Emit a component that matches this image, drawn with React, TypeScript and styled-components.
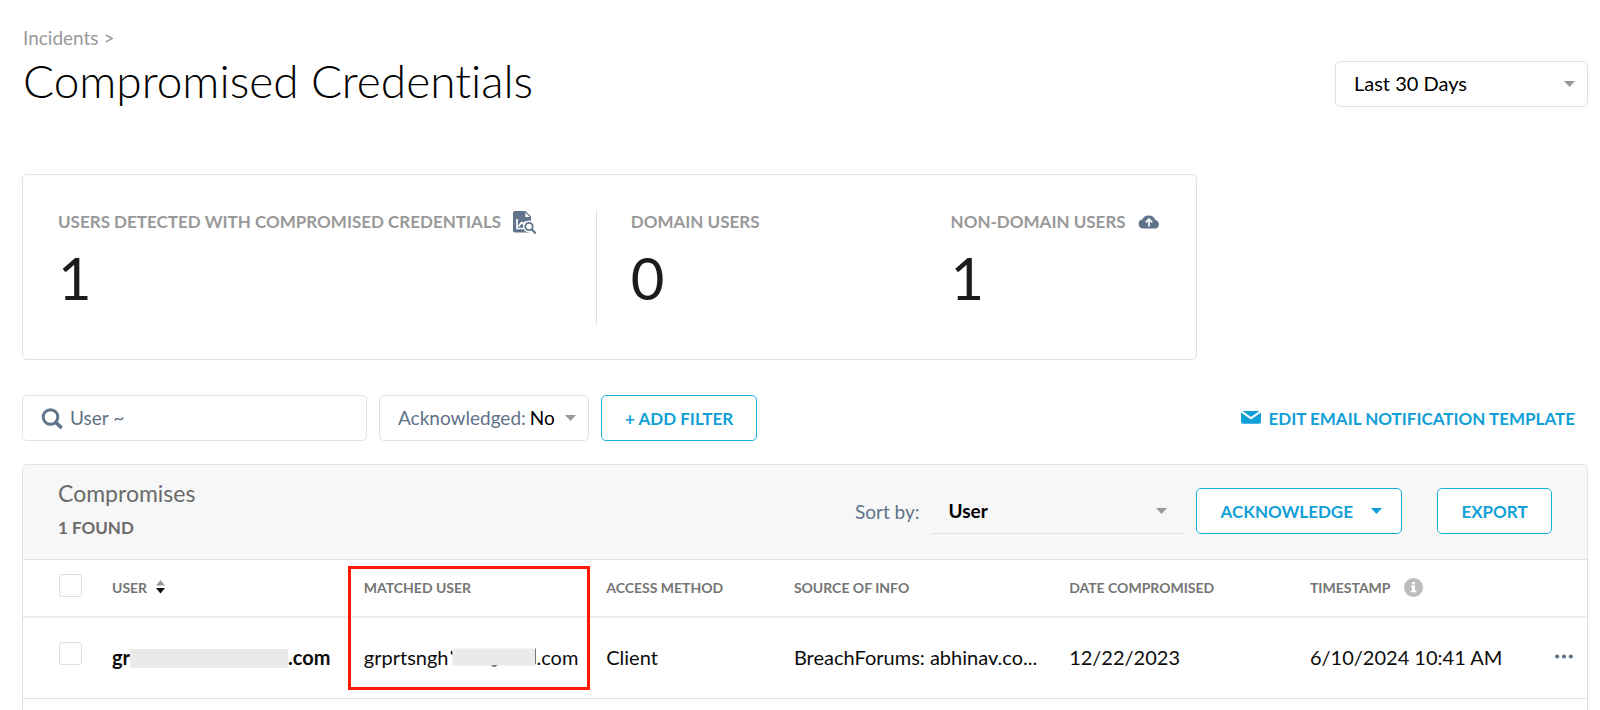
import React from "react";
import styled, { createGlobalStyle } from "styled-components";

const color = {
  ink: "#111111",
  heading: "#6b6b6b",
  muted: "#999999",
  slate: "#5f738a",
  line: "#e2e2e2",
  panel: "#f7f7f7",
  link: "#109fd6",
  outline: "#17b1dc",
  redact: "#eaeaea",
  alert: "#ff1a00",
};

const GlobalStyle = createGlobalStyle`
  *, *::before, *::after { box-sizing: border-box; }
  body {
    margin: 0;
    background: #ffffff;
    color: ${color.ink};
    font-family: Lato, "Liberation Sans", sans-serif;
    font-variant-ligatures: none;
  }
  button, input, select { font-family: inherit; }
`;

const Page = styled.main`
  display: flex;
  flex-direction: column;
  min-height: 100vh;
  padding: 26px 12px 0 22px;
`;

const PageHeader = styled.header`
  display: flex;
  align-items: flex-end;
  justify-content: space-between;
  gap: 24px;
  padding-left: 1px;
`;

const Breadcrumb = styled.nav`
  font-size: 19px;
  line-height: 24px;
  color: ${color.muted};
  a { color: inherit; text-decoration: none; }
`;

const Title = styled.h1`
  margin: 3px 0 0;
  font-size: 46px;
  line-height: 56px;
  font-weight: 300;
  color: #000000;
`;

const RangePicker = styled.div`
  padding-bottom: 2px;
`;

const SelectShell = styled.span<{ $variant: "box" | "line" | "plain" }>`
  display: grid;
  align-items: center;
  height: 46px;
  width: ${(p) => (p.$variant === "plain" ? "auto" : "253px")};
  border: ${(p) => (p.$variant === "box" ? `1px solid ${color.line}` : "0")};
  border-bottom: ${(p) => (p.$variant === "plain" ? "0" : `1px solid ${color.line}`)};
  border-radius: ${(p) => (p.$variant === "box" ? "5px" : "0")};
  > * { grid-area: 1 / 1; }
  > svg { justify-self: end; margin-right: ${(p) => (p.$variant === "line" ? "17px" : "12px")}; pointer-events: none; }
`;

const Select = styled.select<{ $strong?: boolean; $inset?: boolean; $size: number }>`
  appearance: none;
  width: 100%;
  height: 100%;
  border: 0;
  padding: 0 32px ${(p) => (p.$strong ? "0" : "2px")} ${(p) => (p.$inset ? "18px" : "0")};
  background: transparent;
  color: #000000;
  font-size: ${(p) => p.$size}px;
  font-weight: ${(p) => (p.$strong ? 700 : 400)};
`;

const SummaryCard = styled.section`
  display: grid;
  grid-template-columns: 539fr 354fr 210fr;
  width: 75%;
  margin-top: 65px;
  padding: 35px 35px 34px;
  border: 1px solid ${color.line};
  border-radius: 5px;
`;

const Stat = styled.div<{ $divided?: boolean; $indent?: boolean }>`
  min-height: 115px;
  padding-left: ${(p) => (p.$indent ? "34px" : "0")};
  border-right: ${(p) => (p.$divided ? `1px solid ${color.line}` : "0")};
`;

const StatLabel = styled.div`
  display: flex;
  align-items: center;
  gap: 12px;
  height: 24px;
  font-size: 17px;
  line-height: 24px;
  font-weight: 700;
  white-space: nowrap;
  color: ${color.muted};
  svg { flex: none; }
`;

const StatValue = styled.div`
  margin-top: 9px;
  font-size: 58px;
  line-height: 70px;
  color: #1c1c1c;
`;

const Filters = styled.div`
  display: flex;
  align-items: center;
  gap: 12px;
  margin-top: 35px;
`;

const SearchBox = styled.label`
  display: flex;
  align-items: center;
  gap: 7px;
  width: 345px;
  height: 46px;
  padding: 0 18px;
  border: 1px solid ${color.line};
  border-radius: 5px;
`;

const SearchInput = styled.input`
  flex: 1;
  min-width: 0;
  height: 40px;
  border: 0;
  padding: 0 0 2px;
  background: transparent;
  font-size: 19px;
  color: ${color.slate};
  &::placeholder { color: ${color.slate}; opacity: 1; }
`;

const FilterBox = styled.label`
  display: flex;
  align-items: center;
  gap: 4px;
  width: 210px;
  height: 46px;
  padding-left: 18px;
  border: 1px solid ${color.line};
  border-radius: 5px;
  font-size: 19px;
  color: ${color.slate};
  > span:first-child { padding-bottom: 2px; }
  > span:last-child { flex: 1; }
`;

const Button = styled.button<{ $menu?: boolean }>`
  display: flex;
  align-items: center;
  justify-content: center;
  gap: 18px;
  min-width: 115px;
  height: 46px;
  padding: ${(p) => (p.$menu ? "0 19px 0 24px" : "0 23px")};
  border: 1px solid ${color.outline};
  border-radius: 5px;
  background: #ffffff;
  color: ${color.link};
  font-size: 17px;
  font-weight: 700;
  white-space: nowrap;
`;

const TemplateLink = styled.a`
  display: flex;
  align-items: center;
  gap: 7px;
  margin-left: auto;
  padding-right: 13px;
  color: ${color.link};
  font-size: 17px;
  font-weight: 700;
  text-decoration: none;
  white-space: nowrap;
`;

const Panel = styled.section`
  flex: 1;
  margin-top: 23px;
  border: 1px solid ${color.line};
  border-bottom: 0;
  border-radius: 5px 5px 0 0;
`;

const PanelHeader = styled.div`
  display: flex;
  align-items: center;
  justify-content: space-between;
  min-height: 95px;
  padding: 0 35px 2px;
  border-bottom: 1px solid ${color.line};
  border-radius: 5px 5px 0 0;
  background: ${color.panel};
`;

const PanelTitle = styled.h2`
  margin: 0;
  font-size: 23px;
  line-height: 28px;
  font-weight: 400;
  color: ${color.heading};
`;

const FoundCount = styled.p`
  margin: 9px 0 3px;
  font-size: 17px;
  line-height: 24px;
  font-weight: 700;
  color: ${color.heading};
`;

const PanelActions = styled.div`
  display: flex;
  align-items: center;
  gap: 12px;
`;

const SortLabel = styled.label`
  display: flex;
  align-items: center;
  gap: 11px;
  font-size: 19px;
  color: ${color.slate};
`;

const ExportSlot = styled.div`
  margin-left: 23px;
`;

const Table = styled.table`
  width: 100%;
  table-layout: fixed;
  border-collapse: separate;
  border-spacing: 0;
`;

const Col = styled.col<{ $width: string }>`
  width: ${(p) => p.$width};
`;

const HeadCell = styled.th`
  position: relative;
  height: 58px;
  padding: 0 0 2px 12px;
  border-right: 1px solid #ffffff;
  border-bottom: 2px solid #eeeeee;
  font-size: 14px;
  font-weight: 700;
  text-align: left;
  white-space: nowrap;
  color: #757575;
`;

const HeadLabel = styled.span<{ $gap?: number }>`
  display: flex;
  align-items: center;
  gap: ${(p) => p.$gap ?? 0}px;
`;

const Cell = styled.td<{ $strong?: boolean }>`
  height: 81px;
  padding: 0 0 2px 12px;
  border-bottom: 1px solid ${color.line};
  font-size: 20px;
  font-weight: ${(p) => (p.$strong ? 700 : 400)};
  white-space: nowrap;
  color: #0c0c0c;
`;

const MaskedText = styled.span`
  display: flex;
  align-items: center;
`;

const Redaction = styled.span`
  width: 158px;
  height: 19px;
  margin-top: 3px;
  background: ${color.redact};
`;

const Checkbox = styled.input<{ $lift: number }>`
  appearance: none;
  display: block;
  width: 23px;
  height: 23px;
  margin: 0 0 ${(p) => p.$lift}px;
  border: 1px solid #dddddd;
  border-radius: 3px;
  background: #ffffff;
`;

const ColumnHighlight = styled.span`
  position: absolute;
  top: 6px;
  left: -4px;
  right: 3px;
  height: 124px;
  border: 3px solid ${color.alert};
  pointer-events: none;
`;

const MoreButton = styled.button`
  display: block;
  padding: 4px;
  margin: 0 0 2px -1px;
  border: 0;
  background: transparent;
  svg { display: block; }
`;

const Caret = ({ fill = "#999999" }: { fill?: string }) => (
  <svg width="11" height="6" viewBox="0 0 11 6" aria-hidden="true">
    <path d="M0 0h11L5.500 6z" fill={fill} />
  </svg>
);

const ReportIcon = () => (
  <svg width="23" height="23" viewBox="0 0 23 23" aria-hidden="true">
    <path d="M2 0h10.500L18 5.500V19a2.500 2.500 0 0 1-2.500 2.500H2A2 2 0 0 1 0 19.500V2a2 2 0 0 1 2-2z" fill={color.slate} />
    <path d="M12.300 1.500V6h4.500z" fill="#ffffff" />
    <path d="M4 8v9.500h7M5.500 15.500l3-4 2 1.500 2-2.500" fill="none" stroke="#ffffff" strokeWidth="1.700" />
    <circle cx="16" cy="15.500" r="6" fill="#ffffff" />
    <path d="M18 17l5 5-2 2-5-4z" fill="#ffffff" />
    <circle cx="16" cy="15.500" r="3.700" fill="#ffffff" stroke={color.slate} strokeWidth="1.800" />
    <path d="M18.700 18.300l3.300 3.500" stroke={color.slate} strokeWidth="2.200" strokeLinecap="round" />
  </svg>
);

const CloudIcon = () => (
  <svg width="22" height="14" viewBox="0 0 22 14" aria-hidden="true">
    <path d="M5 13.500a4.600 4.600 0 0 1-.7-9.100A7 6.500 0 0 1 17.300 5a4.300 4.300 0 0 1-.3 8.500z" fill={color.slate} />
    <path d="M11 11.500V4.500M7.800 7.300L11 4l3.200 3.300" fill="none" stroke="#ffffff" strokeWidth="1.700" />
  </svg>
);

const SearchIcon = () => (
  <svg width="22" height="22" viewBox="0 0 22 22" aria-hidden="true">
    <circle cx="9.500" cy="10" r="7.300" fill="none" stroke={color.slate} strokeWidth="2.900" />
    <path d="M15 15.500l4.600 4.600" stroke={color.slate} strokeWidth="3.600" strokeLinecap="round" />
  </svg>
);

const MailIcon = () => (
  <svg width="20" height="14" viewBox="0 0 20 14" aria-hidden="true">
    <path d="M1.500 0h17L10 6z" fill={color.link} />
    <path d="M0 1.500l10 7 10-7V11a1.800 1.800 0 0 1-1.800 1.800H1.800A1.800 1.800 0 0 1 0 11z" fill={color.link} />
  </svg>
);

const SortIcon = () => (
  <svg width="9" height="14" viewBox="0 0 9 14" aria-hidden="true">
    <path d="M0 5.500L4.500 0 9 5.500z" fill="#999999" />
    <path d="M0 8h9l-4.500 5.500z" fill="#111111" />
  </svg>
);

const InfoIcon = () => (
  <svg width="19" height="19" viewBox="0 0 19 19" aria-hidden="true">
    <circle cx="9.500" cy="9.500" r="9.500" fill="#bdbdbd" />
    <path d="M8 4h3v2.400H8zM7 7.500h4v5h1.300v1.800H6.700v-1.800H8V9.300H7z" fill="#ffffff" />
  </svg>
);

const DotsIcon = () => (
  <svg width="18" height="5" viewBox="0 0 18 5" aria-hidden="true">
    {[2.2, 9, 15.8].map((x) => (
      <circle key={x} cx={x} cy="2.500" r="2.100" fill={color.slate} />
    ))}
  </svg>
);

/* Partly covered address: slivers of the letters stay visible round the cover. */
const CoveredAddress = () => (
  <svg width="88" height="20" viewBox="0 0 88 20" aria-hidden="true">
    <path d="M3.500 3.500c-2.500 0-2.500 4 0 4.500z" fill={color.ink} />
    <path d="M42 18c1.500 2 5 2 6.500 0z" fill={color.ink} />
    <rect x="3.500" y="1.500" width="83" height="17" fill={color.redact} />
    <path d="M86.500 1.500v15.500" stroke="#777777" strokeWidth="1" />
  </svg>
);

export default function App() {
  return (
    <>
      <GlobalStyle />
      <Page>
        <PageHeader>
          <div>
            <Breadcrumb aria-label="Breadcrumb">
              <a href="#incidents">Incidents</a> &gt;
            </Breadcrumb>
            <Title>Compromised Credentials</Title>
          </div>
          <RangePicker>
            <SelectShell $variant="box">
              <Select $size={20} $inset aria-label="Time range" defaultValue="30">
                <option value="30">Last 30 Days</option>
              </Select>
              <Caret />
            </SelectShell>
          </RangePicker>
        </PageHeader>

        <SummaryCard>
          <Stat $divided>
            <StatLabel>
              USERS DETECTED WITH COMPROMISED CREDENTIALS <ReportIcon />
            </StatLabel>
            <StatValue>1</StatValue>
          </Stat>
          <Stat $indent>
            <StatLabel>DOMAIN USERS</StatLabel>
            <StatValue>0</StatValue>
          </Stat>
          <Stat>
            <StatLabel>
              NON-DOMAIN USERS <CloudIcon />
            </StatLabel>
            <StatValue>1</StatValue>
          </Stat>
        </SummaryCard>

        <Filters>
          <SearchBox>
            <SearchIcon />
            <SearchInput type="text" placeholder="User ~" aria-label="User" />
          </SearchBox>
          <FilterBox>
            <span>Acknowledged:</span>
            <SelectShell $variant="plain">
              <Select $size={19} defaultValue="no">
                <option value="no">No</option>
                <option value="yes">Yes</option>
              </Select>
              <Caret />
            </SelectShell>
          </FilterBox>
          <Button type="button">+ ADD FILTER</Button>
          <TemplateLink href="#template">
            <MailIcon />
            EDIT EMAIL NOTIFICATION TEMPLATE
          </TemplateLink>
        </Filters>

        <Panel>
          <PanelHeader>
            <div>
              <PanelTitle>Compromises</PanelTitle>
              <FoundCount>1 FOUND</FoundCount>
            </div>
            <PanelActions>
              <SortLabel>
                Sort by:
                <SelectShell $variant="line">
                  <Select $size={19} $inset $strong defaultValue="user">
                    <option value="user">User</option>
                  </Select>
                  <Caret />
                </SelectShell>
              </SortLabel>
              <Button type="button" $menu>
                ACKNOWLEDGE <Caret fill={color.link} />
              </Button>
              <ExportSlot>
                <Button type="button">EXPORT</Button>
              </ExportSlot>
            </PanelActions>
          </PanelHeader>

          <Table>
            <colgroup>
              <Col $width="24px" />
              <Col $width="53px" />
              <Col $width="16.1%" />
              <Col $width="15.5%" />
              <Col $width="12%" />
              <Col $width="17.6%" />
              <Col $width="15.4%" />
              <Col $width="15.5%" />
              <Col $width="auto" />
            </colgroup>
            <thead>
              <tr>
                <HeadCell />
                <HeadCell>
                  <Checkbox type="checkbox" aria-label="Select all" $lift={4} />
                </HeadCell>
                <HeadCell>
                  <HeadLabel $gap={9}>
                    USER <SortIcon />
                  </HeadLabel>
                </HeadCell>
                <HeadCell>
                  MATCHED USER
                  <ColumnHighlight />
                </HeadCell>
                <HeadCell>ACCESS METHOD</HeadCell>
                <HeadCell>SOURCE OF INFO</HeadCell>
                <HeadCell>DATE COMPROMISED</HeadCell>
                <HeadCell>
                  <HeadLabel $gap={13}>
                    TIMESTAMP <InfoIcon />
                  </HeadLabel>
                </HeadCell>
                <HeadCell />
              </tr>
            </thead>
            <tbody>
              <tr>
                <Cell />
                <Cell>
                  <Checkbox type="checkbox" aria-label="Select row" $lift={8} />
                </Cell>
                <Cell $strong>
                  <MaskedText>
                    gr
                    <Redaction />
                    .com
                  </MaskedText>
                </Cell>
                <Cell>
                  <MaskedText>
                    grprtsngh
                    <CoveredAddress />
                    .com
                  </MaskedText>
                </Cell>
                <Cell>Client</Cell>
                <Cell>BreachForums: abhinav.co...</Cell>
                <Cell>12/22/2023</Cell>
                <Cell>6/10/2024 10:41 AM</Cell>
                <Cell>
                  <MoreButton type="button" aria-label="More actions">
                    <DotsIcon />
                  </MoreButton>
                </Cell>
              </tr>
            </tbody>
          </Table>
        </Panel>
      </Page>
    </>
  );
}
